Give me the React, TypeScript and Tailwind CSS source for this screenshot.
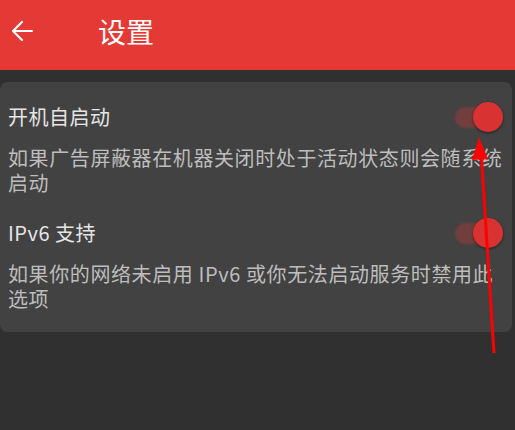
const font = { fontFamily: '"Noto Sans CJK SC", "Noto Sans", sans-serif' };

const Toggle = () => (
  <div className="relative w-[48px] h-[30px] shrink-0">
    <div className="absolute left-0 top-[5px] w-[40px] h-[21px] rounded-full bg-[#e53935]/30 blur-[1px]" />
    <div className="absolute right-0 top-0 w-[30px] h-[30px] rounded-full bg-[#d83232] shadow-[0_1px_3px_rgba(0,0,0,0.5)] blur-[0.5px]" />
  </div>
);

const Row = ({ title, desc }: { title: string; desc: string }) => (
  <div className="flex flex-col">
    <div className="flex items-center justify-between h-[28px] pr-[9px]">
      <span className="text-[20px] leading-[28px] tracking-[0.5px] text-[#e6e6e6]">{title}</span>
      <Toggle />
    </div>
    <p className="mt-[14px] text-[20px] leading-[25px] tracking-[0.6px] text-[#bdbdbd] pr-[4px]">{desc}</p>
  </div>
);

export default function App() {
  return (
    <div className="relative w-[515px] h-[430px] bg-[#303030] overflow-hidden" style={font}>
      <div className="h-[70px] bg-[#e53935] flex items-start">
        <div className="h-[62px] flex items-center">
          <svg width="24" height="24" viewBox="0 0 24 24" className="ml-[10px]" fill="none" stroke="white" strokeWidth="2.2" strokeLinecap="round" strokeLinejoin="round">
            <path d="M22 12H3M12 3l-9 9 9 9" />
          </svg>
          <span className="ml-[64px] text-[28px] text-white leading-none">设置</span>
        </div>
      </div>

      <div className="mt-[12px] w-[512px] rounded-lg bg-[#424242] pl-[8px] pt-[21px] pb-[21px] flex flex-col gap-[24px]">
        <Row title="开机自启动" desc="如果广告屏蔽器在机器关闭时处于活动状态则会随系统启动" />
        <Row title="IPv6 支持" desc="如果你的网络未启用 IPv6 或你无法启动服务时禁用此选项" />
      </div>

      <svg className="absolute left-0 top-0 pointer-events-none" width="515" height="430">
        <line x1="494" y1="353" x2="481" y2="150" stroke="#ff0000" strokeWidth="3" />
        <polygon points="479,137 472,160 488,159" fill="#ff0000" />
      </svg>
    </div>
  );
}
